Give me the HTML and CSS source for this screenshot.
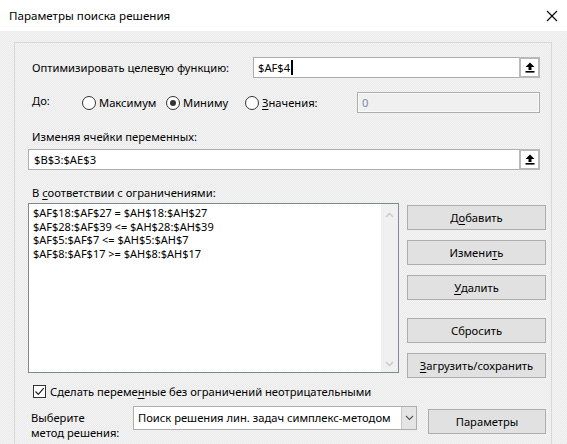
FILE: index.html
```html
<!DOCTYPE html>
<html lang="ru">
<head>
<meta charset="utf-8">
<title>Параметры поиска решения</title>
<link rel="stylesheet" href="styles.css">
</head>
<body>
<div class="window">
  <div class="titlebar">
    <span class="title">Параметры поиска решения</span>
    <svg class="close" width="12" height="12" viewBox="0 0 12 12"><path d="M1 1 L11 11 M11 1 L1 11" stroke="#000" stroke-width="1.1" fill="none"/></svg>
  </div>
  <div class="client">
    <div class="panel">
      <div class="row row-target">
        <span class="lbl lbl-target">Оптимизировать целев<u>у</u>ю функцию:</span>
        <div class="refbox ref-target">
          <span class="reftext">$AF$4<span class="caret"></span></span>
          <span class="refbtn"><svg width="10" height="11" viewBox="0 0 10 11"><path d="M5 0.5 L9.5 5 H6.5 V8 H3.5 V5 H0.5 Z" fill="#000"/><rect x="0.5" y="9" width="9" height="1.6" fill="#000"/></svg></span>
        </div>
      </div>
      <div class="row row-to">
        <span class="lbl lbl-to">До:</span>
        <span class="radio"><span class="circle"></span>Максимум</span>
        <span class="radio"><span class="circle on"></span>Миниму</span>
        <span class="radio"><span class="circle"></span><u>З</u>начения:</span>
        <div class="valbox">0</div>
      </div>
      <div class="lbl lbl-block lbl-vars">Изменяя ячейки переменных:</div>
      <div class="refbox ref-vars">
        <span class="reftext">$B$3:$AE$3</span>
        <span class="refbtn"><svg width="10" height="11" viewBox="0 0 10 11"><path d="M5 0.5 L9.5 5 H6.5 V8 H3.5 V5 H0.5 Z" fill="#000"/><rect x="0.5" y="9" width="9" height="1.6" fill="#000"/></svg></span>
      </div>
      <div class="lbl lbl-block lbl-cons">В <u>с</u>оответствии с ограничениями:</div>
      <div class="consarea">
        <div class="listbox">
          <div class="items">
            <div>$AF$18:$AF$27 = $AH$18:$AH$27</div>
            <div>$AF$28:$AF$39 &lt;= $AH$28:$AH$39</div>
            <div>$AF$5:$AF$7 &lt;= $AH$5:$AH$7</div>
            <div>$AF$8:$AF$17 &gt;= $AH$8:$AH$17</div>
          </div>
          <div class="vscroll">
            <svg width="9" height="6" viewBox="0 0 9 6"><path d="M1 5 L4.5 1.5 L8 5" stroke="#c8c8c8" stroke-width="1.4" fill="none"/></svg>
            <svg width="9" height="6" viewBox="0 0 9 6"><path d="M1 1 L4.5 4.5 L8 1" stroke="#c8c8c8" stroke-width="1.4" fill="none"/></svg>
          </div>
        </div>
        <div class="btncol">
          <div class="btn">Д<u>о</u>бавить</div>
          <div class="btn">Измени<u>т</u>ь</div>
          <div class="btn"><u>У</u>далить</div>
          <div class="btn btn-gap">Сбросить</div>
          <div class="btn"><u>З</u>агрузить/сохранить</div>
        </div>
      </div>
      <div class="checkrow">
        <span class="checkbox"><svg width="11" height="11" viewBox="0 0 11 11"><path d="M1.5 5.5 L4.3 8.3 L9.8 2.2" stroke="#222" stroke-width="1.2" fill="none"/></svg></span>
        <span class="lbl">Сделать переме<u>н</u>ные без ограничений неотрицательными</span>
      </div>
      <div class="methodrow">
        <span class="lbl lbl-method">Выберите<br>метод решения:</span>
        <div class="select">
          <span class="seltext">Поиск решения лин. задач симплекс-методом</span>
          <span class="selarrow"><svg width="9" height="6" viewBox="0 0 9 6"><path d="M1 1 L4.5 4.5 L8 1" stroke="#555" stroke-width="1.1" fill="none"/></svg></span>
        </div>
        <div class="btn btn-params">Параметры</div>
      </div>
    </div>
  </div>
</div>
</body>
</html>
```
FILE: styles.css
```css
* { box-sizing: border-box; }
html, body { margin: 0; padding: 0; }
body {
  width: 567px;
  height: 444px;
  overflow: hidden;
  font-family: "Noto Sans", "Open Sans", sans-serif;
  font-size: 11.2px;
  color: #000;
  background: #fff;
}
u { text-decoration: underline; text-underline-offset: 2px; }

.window { width: 567px; height: 444px; display: flex; flex-direction: column; }

.titlebar {
  height: 31px;
  flex: none;
  background: #fff;
  display: flex;
  align-items: center;
  justify-content: space-between;
  padding: 0 9px 0 9px;
}
.title { font-size: 11.6px; color: #000; }

.client {
  flex: 1;
  background: repeating-conic-gradient(#f5f5f5 0 25%, #e9e9e9 0 50%) 0 0 / 2px 2px;
  padding: 11px 15px 0 14px;
  overflow: hidden;
}

.panel {
  border: 1px solid #d8d8d8;
  border-bottom: none;
  height: 420px;
  padding: 14px 5px 0 13px;
}

.lbl { white-space: nowrap; }

.row { display: flex; align-items: center; height: 21px; }
.row-target .lbl-target { width: 225px; padding-left: 4px; }
.refbox {
  display: flex;
  height: 21px;
  background: #fff;
  border: 1px solid #adadad;
}
.ref-target { width: 287px; }
.reftext { flex: 1; padding-left: 4px; line-height: 19px; display: flex; align-items: center; }
.caret { display: inline-block; width: 2px; height: 15px; background: #000; margin-left: 1px; }
.refbtn {
  width: 21px;
  height: 21px;
  margin: -1px -1px -1px 0;
  border: 2px solid #b9b9b9;
  background: #fff;
  display: flex;
  align-items: center;
  justify-content: center;
}

.row-to { margin-top: 14px; }
.lbl-to { width: 54px; padding-left: 4px; position: relative; top: -2px; }
.radio { display: flex; align-items: center; }
.radio:nth-of-type(2) { width: 84px; }
.radio:nth-of-type(3) { width: 79px; }
.radio:nth-of-type(4) { width: 112px; }
.circle {
  width: 14px; height: 14px;
  border: 1px solid #333;
  border-radius: 50%;
  background: #fff;
  margin-right: 3px;
  display: flex; align-items: center; justify-content: center;
}
.circle.on::after { content: ""; width: 6px; height: 6px; border-radius: 50%; background: #333; }
.valbox {
  width: 183px;
  height: 21px;
  border: 1px solid #adadad;
  background: #f0f0f0;
  box-shadow: inset 0 0 0 1px #fafafa;
  color: #7d8aa8;
  padding-left: 4px;
  line-height: 19px;
}

.lbl-block { padding-left: 4px; height: 16px; line-height: 16px; }
.lbl-vars { margin-top: 16px; }
.ref-vars { margin-top: 4px; width: 512px; }
.ref-vars .reftext { padding-left: 5px; }
.lbl-cons { margin-top: 15px; }

.consarea { display: flex; margin-top: 2px; }
.listbox {
  width: 371px;
  height: 170px;
  border: 1px solid #828790;
  background: #fff;
  display: flex;
}
.items { flex: 1; padding: 2px 0 0 4px; font-size: 11px; line-height: 13.5px; }
.vscroll {
  width: 17px;
  background: #f0f0f0;
  display: flex;
  flex-direction: column;
  justify-content: space-between;
  align-items: center;
  padding: 8px 0 5px 0;
}
.btncol { margin-left: 8px; margin-top: 2px; display: flex; flex-direction: column; gap: 10px; }
.btn {
  width: 139px;
  height: 25px;
  background: #e1e1e1;
  border: 1px solid #adadad;
  display: flex;
  align-items: center;
  justify-content: center;
  white-space: nowrap;
}
.btn-gap { margin-top: 8px; }

.checkrow { display: flex; align-items: center; margin-top: 6px; padding-left: 5px; }
.checkbox {
  width: 13px; height: 13px;
  border: 1px solid #333;
  background: #fff;
  margin-right: 4px;
  display: flex; align-items: center; justify-content: center;
}

.methodrow { display: flex; align-items: flex-start; margin-top: 7px; }
.lbl-method { width: 105px; padding-left: 3px; line-height: 15px; margin-top: 4px; }
.select {
  width: 284px;
  height: 24px;
  border: 1px solid #adadad;
  background: #fff;
  display: flex;
}
.seltext { flex: 1; padding-left: 4px; line-height: 22px; }
.selarrow {
  width: 15px;
  background: #e5e5e5;
  border-left: 1px solid #c8c8c8;
  display: flex; align-items: center; justify-content: center;
}
.btn-params { width: 118px; margin-left: 11px; margin-top: 3px; }
```
